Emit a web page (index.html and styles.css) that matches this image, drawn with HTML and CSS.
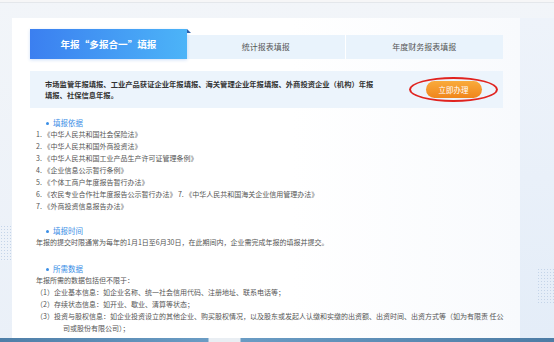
FILE: index.html
```html
<!DOCTYPE html>
<html lang="zh-CN">
<head>
    <meta charset="UTF-8">
    <meta name="viewport" content="width=device-width, initial-scale=1.0">
    <title>年报“多报合一”填报</title>
    <link rel="stylesheet" href="styles.css">
</head>
<body>
    <div class="topbar"></div>
    <div class="main">
        <div class="side side-left"></div>
        <div class="card">
            <div class="tabs">
                <div class="tab tab-active">年报“多报合一”填报</div>
                <div class="tab">统计报表填报</div>
                <div class="tab">年度财务报表填报</div>
            </div>
            <div class="notice">
                <p class="notice-text">市场监管年报填报、工业产品获证企业年报填报、海关管理企业年报填报、外商投资企业（机构）年报填报、社保信息年报。</p>
                <div class="ring">
                    <button class="btn-go">立即办理</button>
                </div>
            </div>
            <div class="section section-first">
                <h3 class="sec-title">填报依据</h3>
                <p>1. 《中华人民共和国社会保险法》</p>
                <p>2. 《中华人民共和国外商投资法》</p>
                <p>3. 《中华人民共和国工业产品生产许可证管理条例》</p>
                <p>4. 《企业信息公示暂行条例》</p>
                <p>5. 《个体工商户年度报告暂行办法》</p>
                <p>6. 《农民专业合作社年度报告公示暂行办法》 7. 《中华人民共和国海关企业信用管理办法》</p>
                <p>7. 《外商投资信息报告办法》</p>
            </div>
            <div class="section">
                <h3 class="sec-title">填报时间</h3>
                <p>年报的提交时限通常为每年的1月1日至6月30日，在此期间内，企业需完成年报的填报并提交。</p>
            </div>
            <div class="section section-last">
                <h3 class="sec-title">所需数据</h3>
                <p>年报所需的数据包括但不限于：</p>
                <p>（1）企业基本信息：如企业名称、统一社会信用代码、注册地址、联系电话等；</p>
                <p>（2）存续状态信息：如开业、歇业、清算等状态；</p>
                <p class="nowrap">（3）投资与股权信息：如企业投资设立的其他企业、购买股权情况，以及股东或发起人认缴和实缴的出资额、出资时间、出资方式等（如为有限责 任公</p>
                <p class="indent">司或股份有限公司）；</p>
            </div>
        </div>
        <div class="side side-right"></div>
    </div>
    <div class="bottombar"></div>
</body>
</html>
```

FILE: styles.css
```css
body {
    margin: 0;
    width: 554px;
    height: 342px;
    overflow: hidden;
    font-family: "Noto Sans CJK SC", "Noto Sans", sans-serif;
    background: linear-gradient(to bottom, #f2f5f9, #eaf0f8);
    color: #555;
}
p, h3 {
    margin: 0;
}
.topbar {
    height: 2px;
    background-color: #f6f6f7;
    border-bottom: 1px solid #e4e7eb;
}
.main {
    display: flex;
    height: 320px;
    padding-top: 15px;
}
.side-left {
    width: 12px;
    background-color: #edf2f9;
    background-image: radial-gradient(circle, #c4d4e8 0.8px, transparent 1px);
    background-size: 3px 3px;
    background-clip: content-box;
    padding-top: 207px;
    height: 36px;
}
.side-right {
    flex: 1;
    background: linear-gradient(to bottom, #eef3fa, #e4edf8);
    position: relative;
}
.side-right::after {
    content: "";
    position: absolute;
    left: 17px;
    top: 250px;
    width: 17px;
    height: 36px;
    background-image: radial-gradient(circle, #c4d4e8 0.8px, transparent 1px);
    background-size: 3px 3px;
}
.card {
    width: 473px;
    padding: 11px 17px 0 18px;
    background: linear-gradient(to right, #ffffff 55%, #f8fafd);
}
.tabs {
    display: flex;
    align-items: flex-end;
    height: 30px;
}
.tab {
    flex: 1;
    height: 24px;
    line-height: 24px;
    text-align: center;
    font-size: 8px;
    color: #555;
    background-color: #e9f3fc;
}
.tab + .tab + .tab {
    border-left: 1px solid #ffffff;
}
.tab-active {
    flex: 0 0 157px;
    height: 30px;
    line-height: 30px;
    font-size: 9.6px;
    font-weight: bold;
    color: #ffffff;
    background: linear-gradient(to right, #3b7ff0, #4cb4f8);
    box-shadow: 0 1px 3px rgba(60, 130, 230, 0.25);
    position: relative;
}
.tab-active::after {
    content: "";
    position: absolute;
    right: -4px;
    top: 0;
    border-left: 4px solid #2d5fa8;
    border-top: 4px solid transparent;
}
.notice {
    display: flex;
    align-items: center;
    justify-content: space-between;
    margin-top: 12px;
    height: 37px;
    padding: 0 5px 0 15px;
    background-color: #ecf4fc;
}
.notice-text {
    width: 335px;
    font-size: 7.3px;
    line-height: 11px;
    font-weight: bold;
    color: #333;
}
.ring {
    display: flex;
    align-items: center;
    justify-content: center;
    width: 85px;
    height: 21px;
    border: 2px solid #e0231f;
    border-radius: 50%;
}
.btn-go {
    width: 56px;
    height: 17px;
    padding: 0;
    border: none;
    border-radius: 9px;
    background: linear-gradient(to bottom, #f9ab3c, #f0851b);
    color: #ffffff;
    font-family: inherit;
    font-size: 7.5px;
    cursor: pointer;
}
.section {
    padding-left: 6px;
    margin-top: 14px;
    font-size: 7px;
    line-height: 12px;
}
.section-first {
    margin-top: 10px;
}
.section-last {
    margin-top: 16px;
}
.sec-title {
    display: flex;
    align-items: center;
    gap: 4px;
    padding-left: 10px;
    font-size: 7.5px;
    line-height: 10px;
    font-weight: normal;
    color: #3a8ee6;
}
.sec-title::before {
    content: "";
    width: 3px;
    height: 3px;
    border-radius: 50%;
    background-color: #3a8ee6;
}
.nowrap {
    white-space: nowrap;
}
.indent {
    padding-left: 27px;
}
.bottombar {
    height: 4px;
    background: linear-gradient(to right, #4f7fa8 0, #6a9cc4 208px, #e9eef3 209px, #e9eef3 240px, #6a9cc4 241px, #4d7ca5 100%);
}
```
